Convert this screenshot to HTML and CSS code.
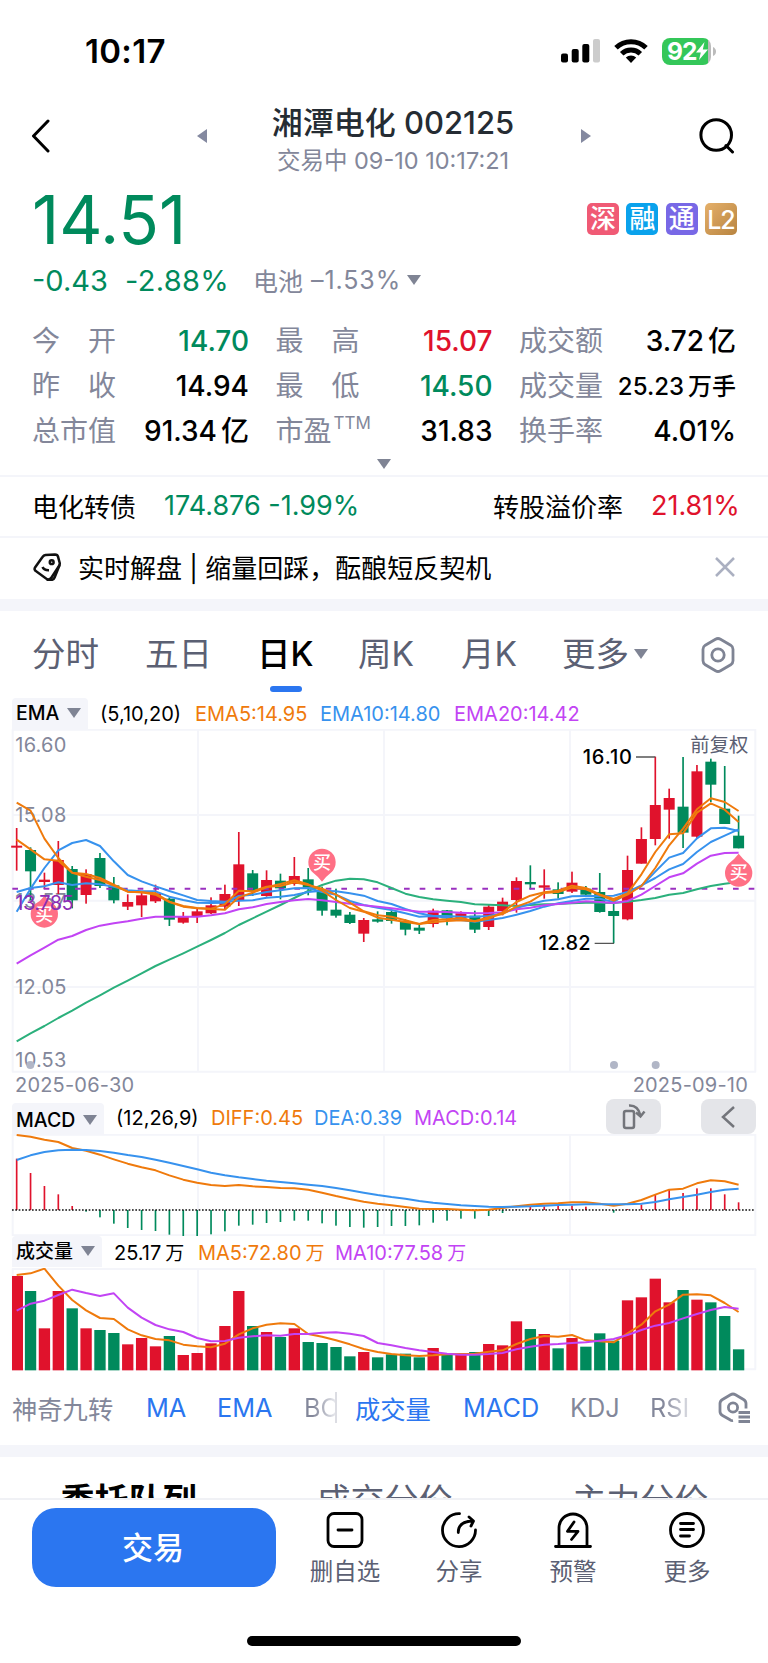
FILE: index.html
```html
<!DOCTYPE html>
<html lang="zh-CN">
<head>
    <meta charset="UTF-8">
    <meta name="viewport" content="width=device-width, initial-scale=1.0">
    <title>湘潭电化 002125</title>
    <link rel="stylesheet" href="styles.css">
</head>
<body>
    <div class="status-bar">
        <span class="time">10:17</span>
        <div class="status-icons">
            <svg class="signal" viewBox="0 0 39 24" width="39" height="24">
                <rect x="0" y="14.5" width="7" height="9" rx="2"/>
                <rect x="10.7" y="10" width="7" height="13.5" rx="2"/>
                <rect x="21.3" y="5" width="7" height="18.5" rx="2"/>
                <rect x="32" y="0" width="7" height="23.5" rx="2" fill="#ccc"/>
            </svg>
            <svg class="wifi" viewBox="0 0 34 24" width="34" height="24">
                <g fill="none" stroke="#000" stroke-width="5">
                    <path d="M2 8.8a21.5 21.5 0 0 1 30 0"/>
                    <path d="M7.7 14.8a13.4 13.4 0 0 1 18.6 0"/>
                </g>
                <path d="M17 24l-5.2-5.4a7.5 7.5 0 0 1 10.4 0z"/>
            </svg>
            <div class="battery">
                <span>92</span>
                <svg viewBox="0 0 12 18" width="12" height="20"><path d="M8.5 0L0 10.5h4.8L3 18l9-10.6H6.8z" fill="#fff"/></svg>
            </div>
            <svg class="battery-cap" viewBox="0 0 3 9" width="3" height="9"><path d="M0 0q3 1.5 3 4.5T0 9z" fill="#bbb"/></svg>
        </div>
    </div>

    <header class="header">
        <svg class="back" viewBox="0 0 20 34" width="20" height="34"><path d="M17 2L2.5 17L17 32"/></svg>
        <svg class="prev" viewBox="0 0 10 14" width="10" height="14"><path d="M10 0v14L0 7z"/></svg>
        <div class="title">
            <h1>湘潭电化 <span>002125</span></h1>
            <p>交易中 <span>09-10 10:17:21</span></p>
        </div>
        <svg class="next" viewBox="0 0 10 14" width="10" height="14"><path d="M0 0v14l10-7z"/></svg>
        <svg class="search" viewBox="0 0 36 36" width="36" height="36"><circle cx="17.2" cy="17" r="15.3"/><path d="M27 27.5l6.5 6.5"/></svg>
    </header>

    <section class="quote">
        <div class="price-row">
            <span class="price">14.51</span>
            <div class="badges">
                <span class="badge badge-sz">深</span>
                <span class="badge badge-rong">融</span>
                <span class="badge badge-tong">通</span>
                <span class="badge badge-l2">L2</span>
            </div>
        </div>
        <div class="change-row">
            <span class="change">-0.43</span>
            <span class="percent">-2.88%</span>
            <span class="sector">电池</span>
            <span class="sector-pct">–1.53%</span>
            <i class="tri"></i>
        </div>
    </section>

    <section class="stats">
        <div class="stat"><span class="spread">今<b></b>开</span><em class="down">14.70</em></div>
        <div class="stat"><span class="spread">最<b></b>高</span><em class="up">15.07</em></div>
        <div class="stat"><span>成交额</span><em>3.72<u>亿</u></em></div>
        <div class="stat"><span class="spread">昨<b></b>收</span><em>14.94</em></div>
        <div class="stat"><span class="spread">最<b></b>低</span><em class="down">14.50</em></div>
        <div class="stat"><span>成交量</span><em class="small">25.23<u>万手</u></em></div>
        <div class="stat"><span>总市值</span><em>91.34<u>亿</u></em></div>
        <div class="stat"><span>市盈<sup>TTM</sup></span><em>31.83</em></div>
        <div class="stat"><span>换手率</span><em>4.01%</em></div>
    </section>
    <div class="expand"><i class="tri"></i></div>

    <section class="bond">
        <span>电化转债</span>
        <em class="down">174.876 -1.99%</em>
        <span class="premium">转股溢价率</span>
        <em class="up">21.81%</em>
    </section>

    <section class="notice">
        <svg viewBox="0 0 28 28" width="28" height="28">
            <path d="M12.5 2L22 1.5q2.5 0 3 2.2l1.6 5.8q.5 1.8-.6 3.5l-7.5 11.5q-1.8 2.700-4.500 1.700L3.500 18.500q-3-1.700-1.300-4.200L9.500 4q1.200-1.800 3-2z"/>
            <path d="M26.600 12l-5 12.500q-1 2.500-4 2.500h-4M9.500 14q1.500 3.400 6.500 3.200"/>
            <circle cx="18.700" cy="9.200" r="1.900"/>
        </svg>
        <span>实时解盘 | 缩量回踩，酝酿短反契机</span>
        <svg class="close" viewBox="0 0 20 20" width="20" height="20"><path d="M1 1l18 18M19 1L1 19"/></svg>
    </section>

    <nav class="periods">
        <span>分时</span>
        <span>五日</span>
        <span class="active">日K</span>
        <span>周K</span>
        <span>月K</span>
        <span>更多<i class="tri"></i></span>
        <svg viewBox="0 0 34 36" width="34" height="36">
            <path d="M14.5 2.200q2.500-1.400 5 0l10.200 6q2.300 1.500 2.300 4v11.600q0 2.500-2.300 4l-10.200 6q-2.500 1.400-5 0l-10.200-6q-2.300-1.500-2.300-4V12.200q0-2.500 2.300-4z"/>
            <circle cx="17" cy="18" r="6.200"/>
        </svg>
    </nav>

    <div class="legend legend-ema">
        <span class="chip">EMA<i class="tri"></i></span>
        <span>(5,10,20)</span>
        <span class="orange">EMA5:14.95</span>
        <span class="blue">EMA10:14.80</span>
        <span class="purple">EMA20:14.42</span>
    </div>
    <!-- chart units are 1/3 px, the same scale the data in chart.js uses -->
    <svg class="chart chart-k" viewBox="0 27 2304 1032">
        <path class="grid" d="M38 29H2266V1055H38ZM594 29V1055M1152 29V1055M1710 29V1055M38 285H2266M38 542H2266M38 801H2266"/>
        <g class="axis">
            <text x="46" y="95" textLength="153">16.60</text>
            <text x="46" y="306" textLength="153">15.08</text>
            <text x="46" y="564" textLength="153">13.57</text>
            <text x="46" y="822" textLength="153">12.05</text>
            <text x="46" y="1040" textLength="153">10.53</text>
        </g>
        <text class="adjust" x="2071" y="96">前复权</text>
        <circle class="event" cx="91" cy="1035" r="12"/>
        <circle class="event" cx="1842" cy="1035" r="12"/>
        <circle class="event" cx="1967" cy="1035" r="12"/>
        <g id="candles"></g>
        <path class="cost" d="M37 506H2268"/>
        <g id="emaLines"></g>
        <g class="mark">
            <path d="M1908 111H1966M1784 670H1842"/>
            <text x="1748" y="132" textLength="148">16.10</text>
            <text x="1616" y="691" textLength="156">12.82</text>
        </g>
        <g class="buy">
            <path d="M133 528q-12 16-28 24a41 41 0 1 0 56 0q-16-8-28-24z"/>
            <text x="133" y="602">买</text>
            <path d="M966 485q-12-16-30-30a41 41 0 1 1 60 0q-18 14-30 30z"/>
            <text x="966" y="447">买</text>
            <path d="M2216 401q-12 16-30 30a41 41 0 1 0 60 0q-18-14-30-30z"/>
            <text x="2216" y="477">买</text>
        </g>
        <text class="cost-label" x="46" y="569" textLength="175">13.785</text>
    </svg>
    <div class="dates"><span>2025-06-30</span><span>2025-09-10</span></div>

    <div class="legend legend-macd">
        <span class="chip">MACD<i class="tri"></i></span>
        <span>(12,26,9)</span>
        <span class="orange">DIFF:0.45</span>
        <span class="blue">DEA:0.39</span>
        <span class="purple">MACD:0.14</span>
        <span class="tool">
            <svg viewBox="0 0 24 28" width="24" height="28"><rect x="2" y="8" width="10" height="17" rx="2"/><path d="M7 2.500q9-.5 11.500 10M14 9.500l4.500 4L22.500 8.500"/></svg>
        </span>
        <span class="tool">
            <svg viewBox="0 0 24 28" width="24" height="28"><path d="M17 4L6 14l11 10"/></svg>
        </span>
    </div>
    <svg class="chart chart-macd" viewBox="0 162 2304 306">
        <path class="grid" d="M38 164H2266V466H38ZM594 164V466M1152 164V466M1710 164V466"/>
        <g id="macdBars"></g>
        <path class="zero" d="M36 390H2264"/>
        <g id="macdLines"></g>
    </svg>

    <div class="legend legend-vol">
        <span class="chip">成交量<i class="tri"></i></span>
        <span>25.17<u>万</u></span>
        <span class="orange">MA5:72.80<u>万</u></span>
        <span class="purple">MA10:77.58<u>万</u></span>
    </div>
    <svg class="chart chart-vol" viewBox="0 564 2304 309">
        <path class="grid" d="M38 567H2266V868H38ZM594 567V868M1152 567V868M1710 567V868"/>
        <g id="volBars"></g>
        <g id="volLines"></g>
    </svg>

    <nav class="indicators">
        <span>神奇九转</span>
        <span class="on">MA</span>
        <span class="on">EMA</span>
        <span class="fade fade-line">BO</span>
        <span class="on">成交量</span>
        <span class="on">MACD</span>
        <span>KDJ</span>
        <span class="fade">RSI</span>
        <svg viewBox="0 0 34 32" width="34" height="32">
            <path d="M15 28.500q-1.500.3-3-.700L4.500 23.500Q2 22 2 19.500v-8q0-2.500 2.500-4L12.500 2.700q2.500-1.400 5 0l8 4.800Q28 9 28 11.500v5"/>
            <circle cx="15" cy="15.500" r="4.600"/>
            <path d="M20.500 20.500H32M20.500 25H32M20.500 29.500H32"/>
        </svg>
    </nav>

    <div class="panels">
        <span class="active">委托队列</span>
        <span>成交分价</span>
        <span>主力分价</span>
    </div>

    <footer class="toolbar">
        <button class="trade">交易</button>
        <div class="action">
            <svg viewBox="0 0 38 36" width="38" height="36"><rect x="2" y="1.500" width="34" height="33" rx="6"/><path d="M12 18h14"/></svg>
            <span>删自选</span>
        </div>
        <div class="action">
            <svg viewBox="0 0 38 36" width="38" height="36"><path d="M19.500 1.600A16.500 16.500 0 1 0 35.500 18M18.300 20.500Q18 9.500 33 9M29 5l4.500 4-2.500 5"/></svg>
            <span>分享</span>
        </div>
        <div class="action">
            <svg viewBox="0 0 38 36" width="38" height="36"><path d="M1.500 34.500h35M5 34V16a14 14 0 0 1 28 0v18M20 10l-6.500 9.300h10.500L17.500 27.500"/></svg>
            <span>预警</span>
        </div>
        <div class="action">
            <svg viewBox="0 0 38 36" width="38" height="36"><circle cx="19" cy="18" r="16.500"/><path d="M12.500 11.500h13M12.500 17.500h13M12.500 24h9"/></svg>
            <span>更多</span>
        </div>
    </footer>
    <div class="home-indicator"></div>

    <script src="chart.js"></script>
</body>
</html>
```
FILE: styles.css
```css
/* General Styles */
* {
    box-sizing: border-box;
}

body {
    margin: 0;
    width: 768px;
    height: 1663px;
    overflow: hidden;
    background: #fff;
    color: #000;
    font-family: Inter, "Noto Sans CJK SC", sans-serif;
    display: flex;
    flex-direction: column;
}

body > * {
    flex-shrink: 0;
}

em, i, u {
    font-style: normal;
    text-decoration: none;
}

svg {
    display: block;
}

.up {
    color: #e0122c;
}

.down {
    color: #008a5c;
}

.orange {
    color: #ef7a0c;
}

.blue {
    color: #3792ee;
}

.purple {
    color: #c244f4;
}

.tri {
    display: inline-block;
    width: 0;
    border: 7px solid transparent;
    border-top: 10px solid #7f8494;
    border-bottom: 0;
}

/* Status bar */
.status-bar {
    height: 96px;
    padding: 6px 52px 0 85px;
    display: flex;
    justify-content: space-between;
    align-items: center;
}

.time {
    font-size: 33px;
    font-weight: 600;
    letter-spacing: 0.3px;
}

.status-icons {
    display: flex;
    align-items: center;
}

.wifi {
    margin-left: 14px;
}

.battery {
    margin-left: 14px;
    width: 49px;
    height: 27px;
    border-radius: 8px;
    background: linear-gradient(90deg, #34c759 46px, #bbb 46px);
    color: #fff;
    font-size: 24.5px;
    font-weight: 700;
    line-height: 27px;
    padding-left: 5px;
    display: flex;
    align-items: center;
    letter-spacing: -1px;
}

.battery-cap {
    margin-left: 2px;
}

/* Header */
.header {
    height: 82px;
    padding: 0 33px 0 31px;
    display: grid;
    grid-template-columns: 166px 10px 1fr 10px 144px;
    align-items: center;
}

.header .back,
.header .search {
    fill: none;
    stroke: #000;
    stroke-width: 3;
    stroke-linecap: round;
    stroke-linejoin: round;
}

.header .prev,
.header .next {
    fill: #8489a0;
}

.header .search {
    justify-self: end;
}

.header .back,
.header .search,
.header .prev,
.header .next {
    margin-top: -2px;
}

.title {
    text-align: center;
    padding-right: 2px;
    padding-top: 3px;
}

.title h1 {
    margin: 0;
    font-size: 31px;
    line-height: 44px;
    font-weight: 500;
    color: #252c33;
    white-space: nowrap;
}

.title p {
    margin: 0;
    font-size: 23.5px;
    line-height: 32px;
    color: #83879a;
}

/* Price */
.quote {
    padding: 0 31px 0 32px;
    height: 130px;
}

.price-row {
    display: flex;
    justify-content: space-between;
    height: 82px;
}

.price {
    font-size: 67px;
    line-height: 83px;
    color: #008a5c;
    letter-spacing: -0.1px;
}

.badges {
    display: flex;
    gap: 7.3px;
    padding-top: 25px;
}

.badge {
    width: 32px;
    height: 32px;
    border-radius: 5px;
    color: #fff;
    font-size: 26px;
    line-height: 31px;
    font-weight: 500;
    text-align: center;
}

.badge-sz {
    background: #f05a75;
}

.badge-rong {
    background: #0aa2ec;
}

.badge-tong {
    background: #7868e6;
}

.badge-l2 {
    background: linear-gradient(135deg, #e5b06a, #b88440);
    font-size: 25px;
    letter-spacing: -1px;
    line-height: 34px;
}

.change-row {
    display: grid;
    grid-template-columns: 93px 128px 58px 96px 20px;
    align-items: center;
    height: 42px;
    margin-top: -1px;
    font-size: 29px;
    color: #008a5c;
}

.change-row .percent {
    letter-spacing: 0.3px;
}

.change-row .sector,
.change-row .sector-pct {
    font-size: 25px;
    color: #83879a;
}

.change-row .sector-pct {
    letter-spacing: 0.9px;
}

/* Stats */
.stats {
    padding: 10px 32px 0 32px;
    display: grid;
    grid-template-columns: 217px 217px 217px;
    justify-content: space-between;
    grid-auto-rows: 45.4px;
}

.stat {
    display: flex;
    justify-content: space-between;
    align-items: center;
    font-size: 28px;
    line-height: 45px;
    white-space: nowrap;
    padding-top: 1px;
}

.stat span {
    color: #83879a;
}

.stat span b {
    display: inline-block;
    width: 28px;
}

.stat sup {
    font-size: 17px;
    line-height: 0;
    vertical-align: 12px;
    margin-left: 2px;
}

.stat em {
    font-weight: 500;
}

.stat em u {
    margin-left: 4px;
}

.stat .small {
    font-size: 24px;
}

.expand {
    height: 23px;
    padding-bottom: 2px;
    display: flex;
    justify-content: center;
    align-items: center;
    border-bottom: 2px solid #f4f5fa;
}

/* Bond and notice rows */
.bond {
    height: 61px;
    padding-left: 32px;
    display: grid;
    grid-template-columns: 132px 329px 158px 1fr;
    align-items: center;
    font-size: 26px;
    border-bottom: 2px solid #f4f5fa;
    padding-bottom: 3px;
}

.bond em {
    font-size: 27px;
}

.notice {
    height: 73px;
    padding: 0 33px 4px;
    display: flex;
    align-items: center;
    font-size: 26px;
    border-bottom: 12px solid #f4f5fa;
}

.notice svg {
    fill: none;
    stroke: #111;
    stroke-width: 2.5;
    margin-right: 17px;
}

.notice .close {
    stroke: #abb0c1;
    margin: 0 0 0 auto;
}

/* Period tabs */
.periods {
    height: 87px;
    padding-left: 32px;
    display: grid;
    grid-template-columns: 113px 112px 101px 103px 101px 139px 34px;
    align-items: start;
    padding-top: 19px;
    font-size: 33.5px;
    line-height: 48px;
    color: #5b6073;
}

.periods span {
    white-space: nowrap;
    justify-self: start;
}

.periods .active {
    color: #000;
    font-weight: 500;
    position: relative;
}

.periods .active::after {
    content: "";
    position: absolute;
    left: 13px;
    top: 56px;
    width: 32px;
    height: 6px;
    border-radius: 3px;
    background: #2b76f0;
}

.periods .tri {
    margin-left: 5px;
    vertical-align: 7px;
}

.periods svg {
    margin-top: 7px;
    fill: none;
    stroke: #7f8494;
    stroke-width: 2.8;
}

/* Legends above each chart */
.legend {
    height: 31px;
    padding-left: 12px;
    display: grid;
    align-items: center;
    font-size: 20px;
    white-space: nowrap;
}

.legend-ema {
    grid-template-columns: 88px 95px 125px 134px 150px;
}

.legend-macd {
    height: 35px;
    grid-template-columns: 104px 95px 103px 100px 192px 95px 55px;
}

.legend-macd span:not(.tool) {
    padding-top: 3px;
}

.legend-macd .chip {
    align-self: end;
    line-height: 28px;
}

.legend-vol {
    height: 32px;
    grid-template-columns: 102px 84px 137px 150px;
    padding-bottom: 2px;
}

.legend u {
    margin-left: 4px;
    font-size: 19px;
}

.chip {
    justify-self: start;
    height: 31px;
    line-height: 31px;
    padding: 0 7px 0 4px;
    border-radius: 4px 4px 0 0;
    background: #f4f5fa;
}

.chip .tri {
    margin-left: 8px;
    vertical-align: 2px;
}

.legend-ema .chip,
.legend-macd .chip {
    font-weight: 500;
    font-size: 19.5px;
}

.legend-vol .chip {
    font-size: 19px;
    font-weight: 500;
}

.tool {
    width: 55px;
    height: 35px;
    border-radius: 8px;
    background: #e4e5e9;
    display: flex;
    justify-content: center;
    align-items: center;
}

.tool svg {
    fill: none;
    stroke: #73757b;
    stroke-width: 2.5;
}

.dates {
    display: flex;
    justify-content: space-between;
    padding: 0 20px 0 15px;
    height: 26px;
    font-size: 20px;
    line-height: 24px;
    letter-spacing: 0.2px;
    color: #83879a;
}

/* Charts */
.chart {
    width: 768px;
    fill: none;
    stroke-width: 6;
    stroke-linejoin: round;
}

.chart-k {
    height: 344px;
}

.chart-macd {
    height: 102px;
}

.chart-vol {
    height: 103px;
}

.chart text {
    font-size: 60px;
    stroke: none;
}

.grid {
    stroke: #f4f5fa;
    stroke-width: 6;
}

.axis {
    fill: #83879a;
}

.chart .adjust {
    fill: #5b6073;
    font-size: 58px;
}

.event {
    fill: #b1b6c6;
}

.cost {
    stroke: #9a30c0;
    stroke-width: 6;
    stroke-dasharray: 17 30;
}

.cost-label {
    fill: #8a2bb5;
}

.mark {
    fill: #000;
    font-weight: 500;
}

.mark path {
    stroke: #555;
    stroke-width: 4;
}

.buy path {
    fill: #ff6f85;
}

.chart .buy text {
    fill: #fff;
    font-size: 54px;
    font-weight: 500;
    text-anchor: middle;
}

.zero {
    stroke: #111;
    stroke-width: 5;
    stroke-dasharray: 5 5;
}

/* Indicator picker */
.indicators {
    height: 86px;
    padding: 0 0 1px 12px;
    border-bottom: 12px solid #f4f5fa;
    display: grid;
    grid-template-columns: 134px 71px 87px 51px 108px 107px 80px 68px 34px;
    align-items: center;
    font-size: 25.3px;
    color: #83879a;
    white-space: nowrap;
}

.indicators .on {
    color: #2b76f0;
}

.indicators .fade {
    width: 33px;
    overflow: hidden;
    color: transparent;
    background: linear-gradient(90deg, #83879a 30%, #e6e7ec);
    -webkit-background-clip: text;
    background-clip: text;
}

.indicators .fade:not(.fade-line) {
    width: 42px;
}

.indicators .fade-line {
    border-right: 2px solid #dcdde3;
}

.indicators svg {
    fill: none;
    stroke: #7f8494;
    stroke-width: 2.8;
}

/* Queue tabs, cut off by the toolbar */
.panels {
    height: 41px;
    overflow: hidden;
    padding: 21px 0 0 1px;
    display: grid;
    grid-template-columns: repeat(3, 1fr);
    text-align: center;
    font-size: 34px;
    line-height: 46px;
    color: #5b6073;
}

.panels .active {
    color: #000;
    font-weight: 700;
}

/* Bottom toolbar */
.toolbar {
    border-top: 2px solid #f0f1f5;
    padding: 8px 24px 0 32px;
    height: 138px;
    display: flex;
}

.trade {
    width: 244px;
    height: 79px;
    margin-right: 12px;
    padding: 0 2px 4px 0;
    border: none;
    border-radius: 24px;
    background: #2b76f0;
    color: #fff;
    font-family: inherit;
    font-size: 31px;
    font-weight: 500;
}

.action {
    width: 114px;
    padding-top: 4px;
    display: flex;
    flex-direction: column;
    align-items: center;
    font-size: 23.5px;
    line-height: 32px;
    color: #5b6073;
    gap: 8px;
}

.action svg {
    fill: none;
    stroke: #000;
    stroke-width: 2.8;
    stroke-linecap: round;
    stroke-linejoin: round;
}

.home-indicator {
    width: 274px;
    height: 10px;
    margin: 0 auto;
    border-radius: 5px;
    background: #000;
}
```
FILE: chart.js
```js
const RED = '#e0122c';
const GREEN = '#008a5c';
const ORANGE = '#ef7a0c';
const BLUE = '#3792ee';
const PURPLE = '#c244f4';

// x of the i-th trading day
const px = i => 50 + i * 41.65;

// colour, high, body top, body bottom, low
const candles = [
    ['r',324,377,383,452],['g',382,390,454,540],['r',458,479,486,507],['r',363,420,495,522],['g',438,447,541,565],
    ['r',448,462,525,551],['g',399,414,498,504],['g',471,496,541,550],['r',523,546,560,570],['r',515,526,556,591],
    ['r',494,520,544,549],['g',532,536,599,618],['r',576,591,608,611],['r',566,574,591,609],['r',532,556,580,582],
    ['r',494,522,560,570],['r',336,433,540,558],['g',450,460,514,528],['r',451,480,528,530],['g',461,482,505,538],
    ['r',411,468,492,497],['g',444,478,503,526],['g',500,510,572,587],['g',506,569,587,593],['g',576,584,609,612],
    ['r',594,600,641,666],['g',574,598,605,608],['g',572,576,603,611],['g',598,604,629,646],['g',614,623,632,642],
    ['r',566,572,612,622],['g',570,571,595,616],['r',574,580,598,602],['g',572,587,629,639],['r',552,560,621,630],
    ['r',533,545,573,586],['r',472,483,540,578],['g',436,486,493,508],['r',448,496,503,536],['g',487,508,522,536],
    ['r',455,488,515,519],['g',498,506,524,528],['g',459,516,576,578],['g',550,573,588,670],['r',407,450,598,601],
    ['r',322,357,431,431],['r',110,255,357,376],['r',206,234,269,356],['g',111,260,338,384],['r',135,154,350,354],
    ['g',116,125,194,246],['g',138,266,312,312],['g',287,347,385,385]
];

const emaLines = [
    ['#2bb07c', [964,940,918,894,872,848,826,803,782,760,738,719,700,680,660,639,615,595,575,555,534,513,495,482,476,478,487,504,521,531,538,542,546,553,554,556,558,555,553,552,550,548,548,549,545,540,534,524,519,508,498,491,486]],
    [BLUE, [575,506,444,391,369,360,378,424,465,484,499,513,526,540,543,545,542,541,533,530,525,516,512,514,520,527,543,552,567,580,588,588,590,590,588,580,564,552,542,538,529,528,528,527,516,496,474,448,432,396,366,347,328]],
    [BLUE, [516,504,499,487,495,490,493,500,511,514,514,530,540,548,549,548,528,524,516,511,505,504,516,524,543,555,563,570,580,590,588,593,600,605,600,594,584,573,560,550,543,536,536,546,520,498,455,413,399,355,325,323,333]],
    [PURPLE, [731,706,683,659,648,630,617,610,604,596,590,590,590,590,586,580,568,562,552,546,541,537,541,546,551,556,560,565,570,575,575,576,578,580,579,577,568,563,556,552,548,544,546,549,543,524,498,472,460,431,407,399,398]],
    [ORANGE, [248,272,356,414,458,462,474,494,515,517,524,546,560,565,567,569,532,518,502,492,481,493,512,540,564,575,593,599,606,612,600,598,594,604,592,582,560,545,519,516,503,508,525,542,524,498,444,376,326,268,235,246,273]],
    [ORANGE, [359,388,418,422,458,470,480,497,515,517,520,545,558,564,566,553,512,514,500,498,487,495,506,524,548,574,586,590,601,612,607,603,601,604,596,577,546,527,517,512,497,504,523,537,520,463,396,343,340,278,250,269,306]]
];

const macd = [236,279,318,343,378,395,412,431,444,450,453,464,468,468,463,454,437,434,429,426,422,422,430,437,441,443,441,438,438,436,428,422,416,416,408,399,388,381,379,378,377,380,390,398,387,374,345,329,339,325,325,343,367];

const macdLines = [
    [ORANGE, [165,170,179,186,204,212,224,238,251,262,271,286,299,308,315,318,315,319,321,324,325,329,338,348,357,365,371,376,381,386,387,387,389,391,389,384,379,374,371,370,367,367,371,377,371,360,344,329,326,310,301,304,314]],
    [BLUE, [240,226,216,211,209,210,213,218,225,231,239,248,258,268,278,286,292,297,302,306,310,314,318,324,331,338,345,351,356,363,368,372,376,378,380,381,380,379,377,375,374,373,373,373,373,371,366,358,351,344,336,329,326]]
];

const volume = [588,633,745,633,685,745,750,759,793,774,799,768,825,819,790,738,633,738,756,771,745,786,789,801,829,816,832,823,821,832,804,824,823,816,792,796,724,747,762,805,774,800,760,782,661,652,596,667,630,659,667,708,808];
// days drawn green on the volume panel
const volDown = [1,4,6,7,11,17,19,21,22,23,24,26,27,28,29,31,33,37,39,41,42,43,48,50,51,52];

const volLines = [
    [ORANGE, [585,580,566,617,660,691,714,717,748,766,777,781,794,799,802,791,763,745,734,730,732,762,770,781,793,807,816,822,826,828,826,823,822,821,815,811,792,777,768,770,765,781,784,787,760,734,694,674,644,643,646,669,696]],
    [PURPLE, [692,671,662,645,629,639,648,640,683,713,735,748,756,774,784,783,773,769,766,767,762,762,758,757,761,768,789,796,804,811,816,821,824,824,822,819,808,800,794,792,789,787,782,777,765,750,737,729,715,702,690,681,686]]
];

function rect(x, y, w, h, color) {
    return `<rect x="${x}" y="${y}" width="${w}" height="${h}" fill="${color}"/>`;
}

function drawLines(id, lines) {
    document.getElementById(id).innerHTML = lines.map(([color, ys]) =>
        `<polyline stroke="${color}" points="${ys.map((y, i) => px(i) + ',' + y).join(' ')}"/>`
    ).join('');
}

document.getElementById('candles').innerHTML = candles.map(([c, high, top, bottom, low], i) => {
    const color = c === 'r' ? RED : GREEN;
    return rect(px(i) - 2.5, high, 5, low - high, color) + rect(px(i) - 16.5, top, 33, bottom - top, color);
}).join('');

document.getElementById('macdBars').innerHTML = macd.map((y, i) =>
    rect(px(i) - 2.5, Math.min(y, 390), 5, Math.abs(y - 390), y < 390 ? RED : GREEN)
).join('');

document.getElementById('volBars').innerHTML = volume.map((y, i) =>
    rect(px(i) - (i ? 17 : 14), y, i ? 34 : 33, 871 - y, volDown.includes(i) ? GREEN : RED)
).join('');

drawLines('emaLines', emaLines);
drawLines('macdLines', macdLines);
drawLines('volLines', volLines);
```
